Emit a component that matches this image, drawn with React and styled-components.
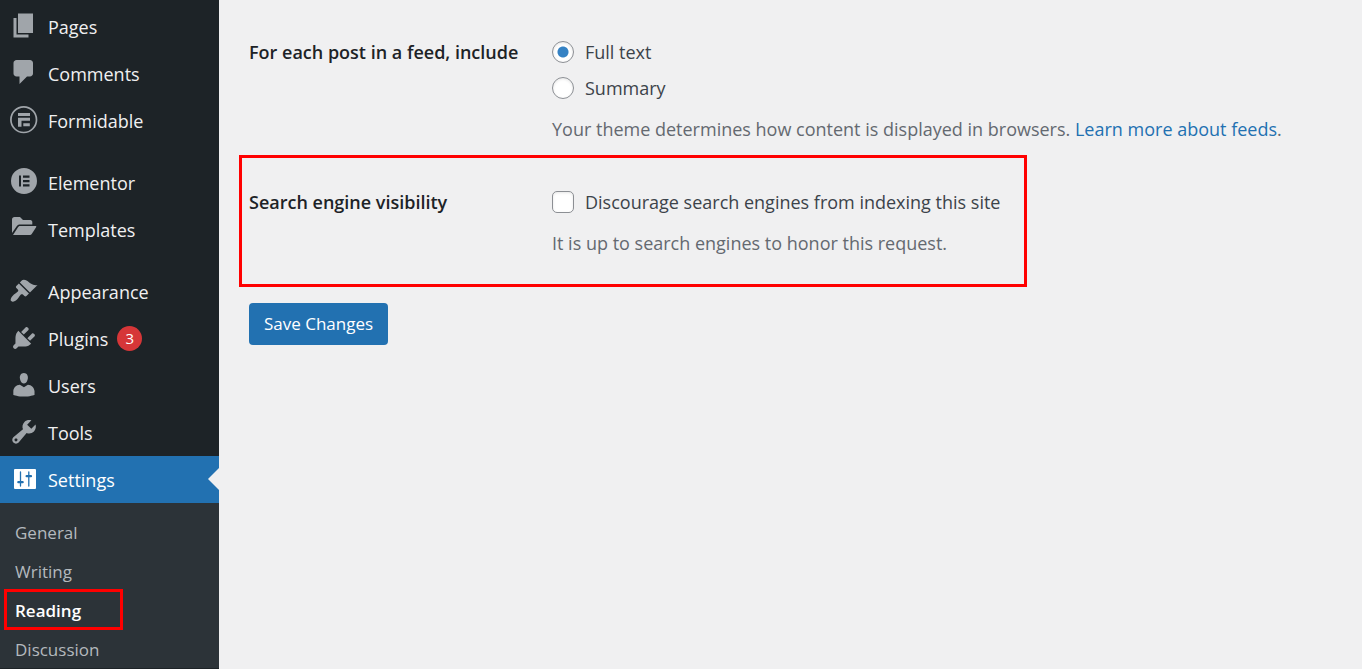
import React from "react";
import styled, { createGlobalStyle, css } from "styled-components";

const GlobalStyle = createGlobalStyle`
  * {
    box-sizing: border-box;
  }
  body {
    margin: 0;
    background-color: #f0f0f1;
    font-family: "Open Sans", "Noto Sans", sans-serif;
    font-size: 18px;
    line-height: 26px;
    color: #3c434a;
  }
`
const Page = styled.div`
  display: flex;
  min-height: 100vh;
`
const Sidebar = styled.nav`
  flex: none;
  width: 219px;
  padding-top: 3px;
  background-color: #1d2327;
`
const Menu = styled.ul`
  list-style: none;
  margin: 0;
  padding: 0;
`
const MenuItem = styled.li`
  margin-top: ${props=>props.$separated ? 15 : 0}px;
`
const MenuLink = styled.a`
  position: relative;
  display: flex;
  align-items: center;
  gap: 9px;
  height: 47px;
  padding-left: 9px;
  color: ${props=>props.$current ? '#fff' : '#f0f0f1'};
  background-color: ${props=>props.$current ? '#2271b1' : 'transparent'};
  text-decoration: none;
  ${props=>props.$current && css`
    &::after {
      content: "";
      position: absolute;
      right: 0;
      top: 12px;
      border: 11px solid transparent;
      border-left-width: 0;
      border-right-color: #f0f0f1;
    }
  `}
`
const MenuIcon = styled.svg`
  flex: none;
  width: 30px;
  height: 30px;
  margin-bottom: 1px;
  fill: ${props=>props.$current ? '#fff' : '#a0a5aa'};
`
const Badge = styled.span`
  width: 25px;
  height: 25px;
  border-radius: 50%;
  background-color: #d63638;
  color: #fff;
  font-size: 15px;
  line-height: 25px;
  text-align: center;
`
const SubMenu = styled.ul`
  list-style: none;
  margin: 0;
  padding: 9px 0 0 5px;
  background-color: #2c3338;
`
const SubLink = styled.a`
  display: flex;
  align-items: center;
  width: 117px;
  height: 39px;
  padding: 2px 0 0 10px;
  font-size: 17px;
  color: #b4b9be;
  text-decoration: none;
  ${props=>props.$current && css`
    color: #fff;
    font-weight: 600;
    outline: 3px solid #f00;
    outline-offset: -2px;
  `}
`
const Content = styled.main`
  flex: 1;
  min-width: 0;
  padding: 5px 20px 0;
`
const Field = styled.section`
  display: grid;
  grid-template-columns: 303px 1fr;
  width: ${props=>props.$marked ? 'fit-content' : 'auto'};
  padding: 28px 24px ${props=>props.$marked ? 28 : 10}px 7px;
  border: 3px solid ${props=>props.$marked ? '#f00' : 'transparent'};
`
const FieldTitle = styled.h2`
  margin: 0;
  padding-top: 3px;
  font-size: 18px;
  line-height: 26px;
  font-weight: 600;
  color: #1d2327;
`
const Options = styled.div`
  display: flex;
  flex-direction: column;
  align-items: flex-start;
  gap: 4px;
`
const Option = styled.label`
  display: flex;
  align-items: center;
  gap: 11px;
  height: 32px;
`
const Choice = styled.input`
  appearance: none;
  flex: none;
  width: 22px;
  height: 22px;
  margin: 0;
  border: 1px solid #8c8f94;
  border-radius: ${props=>props.type === 'radio' ? '50%' : '5px'};
  background-color: #fff;
  box-shadow: inset 0 1px 3px rgba(0, 0, 0, 0.1);
  &:checked {
    background-image: radial-gradient(circle, #3582c4 5px, transparent 6px);
  }
`
const Hint = styled.p`
  margin: 12px 0 0;
  color: #646970;
`
const HintLink = styled.a`
  color: #2271b1;
  text-decoration: none;
`
const SaveButton = styled.button`
  height: 42px;
  margin: 16px 10px;
  padding: 0 15px;
  border: 0;
  border-radius: 4px;
  background-color: #2271b1;
  color: #fff;
  font: inherit;
  font-size: 17px;
`

const icons = {
  pages: <path d="M6 15V2h10v13H6zm-1 1h8v2H3V5h2v11z" />,
  comments: <path d="M5 2h9c1.1 0 2 .9 2 2v7c0 1.1-.9 2-2 2h-2l-5 5v-5H5c-1.1 0-2-.9-2-2V4c0-1.1.9-2 2-2z" />,
  formidable: (
    <>
      <circle cx="14.7" cy="14.7" r="12.8" fill="none" stroke="#a0a5aa" strokeWidth="1.7" />
      <path d="M9 8h12v3H9zM9 12.700h12v3h-8.500v6H9zM14.300 18.200h6.500v3h-6.500z" />
    </>
  ),
  elementor: (
    <path fillRule="evenodd" d="M15 1a13 13 0 1 0 0 26a13 13 0 1 0 0-26zM10 8.500h2v11h-2zM14 8.500h6.500v2.200H14zM14 13h6.500v2.200H14zM14 17.300h6.500v2.200H14z" />
  ),
  templates: (
    <path d="M3 19V5.500C3 4 4 3 5.500 3H11l3 3h7.500C22.500 6 23.300 7 23.300 8v2.500H11c-1.500 0-2.500.6-3.300 1.700zM4 21l5-7.700c.6-.9 1.200-1.300 2.200-1.300H26.500c.8 0 1 .6.6 1.200l-4.200 6.600c-.5.8-1.200 1.200-2 1.200z" />
  ),
  appearance: <path d="M14.480 11.060L7.410 3.990l1.500-1.500c.5-.56 2.300-.47 3.510.32 1.210.8 1.430 1.280 2.910 2.100 1.180.64 2.450 1.260 4.450.85zm-.71.71L6.700 4.700 4.930 6.470c-.39.39-.39 1.020 0 1.410l1.060 1.060c.39.39.39 1.030 0 1.420-.6.6-1.430 1.110-2.210 1.690-.35.26-.7.53-1.010.84C1.430 14.230.4 16.080 1.400 17.070c.99 1 2.840-.03 4.180-1.360.31-.31.58-.66.85-1.020.57-.78 1.080-1.610 1.690-2.210.39-.39 1.020-.39 1.410 0l1.060 1.060c.39.39 1.020.39 1.410 0z" />,
  plugins: <path d="M13.110 4.360L9.870 7.600 8 5.730l3.240-3.240c.35-.34 1.050-.2 1.560.32.52.51.66 1.210.31 1.550zm-8 1.770l.91-1.120 9.010 9.010-1.190.84c-.71.71-2.630 1.160-3.820 1.160H6.140L4.900 17.260c-.59.59-1.540.59-2.120 0-.59-.58-.59-1.530 0-2.120l1.240-1.240v-3.880c0-1.130.4-3.190 1.090-3.890zm7.260 3.970l3.240-3.240c.34-.35 1.040-.21 1.550.31.52.51.66 1.210.31 1.550l-3.240 3.250z" />,
  users: <path d="M10 9.250c-2.270 0-2.730-3.440-2.730-3.440C7 4.020 7.820 2 9.970 2c2.160 0 2.980 2.020 2.710 3.810 0 0-.41 3.440-2.680 3.440zm0 2.570L12.720 10c2.390 0 4.520 2.330 4.520 4.530v2.490s-3.650 1.130-7.240 1.130c-3.650 0-7.240-1.130-7.240-1.130v-2.490c0-2.250 1.940-4.480 4.470-4.480z" />,
  tools: <path d="M16.680 9.770c-1.340 1.340-3.300 1.670-4.950.99l-5.410 6.520c-.99.99-2.590.99-3.580 0s-.99-2.590 0-3.570l6.520-5.420c-.68-1.650-.35-3.610.99-4.950 1.280-1.280 3.120-1.620 4.720-1.060l-2.890 2.890 2.820 2.820 2.860-2.870c.53 1.580.18 3.390-1.080 4.650zM3.810 16.210c.4.39 1.040.39 1.430 0 .4-.4.4-1.040 0-1.430-.39-.4-1.030-.4-1.430 0-.39.39-.39 1.030 0 1.430z" />,
  settings: (
    <>
      <rect x="5" y="5" width="22" height="20" rx="1" />
      <path d="M11.500 8v14M19.800 8v14" fill="none" stroke="#2271b1" strokeWidth="1.300" strokeLinecap="round" />
      <path d="M9.300 18.200h4.400M17.600 12.200H22" fill="none" stroke="#2271b1" strokeWidth="2.200" strokeLinecap="round" />
    </>
  ),
}
const menu = [
  {title: 'Pages', icon: 'pages', box: '0 0.3 20 20'},
  {title: 'Comments', icon: 'comments', box: '0 0.7 20 20'},
  {title: 'Formidable', icon: 'formidable', box: '0 0 30 30'},
  {title: 'Elementor', icon: 'elementor', box: '0 0 30 30', separated: true},
  {title: 'Templates', icon: 'templates', box: '0 0 30 30'},
  {title: 'Appearance', icon: 'appearance', box: '-0.2 -0.5 21 21', separated: true},
  {title: 'Plugins', icon: 'plugins', box: '-0.5 -0.5 21 21', count: 3},
  {title: 'Users', icon: 'users', box: '-0.2 0 20.5 20.5'},
  {title: 'Tools', icon: 'tools', box: '-0.2 0 20.3 20.3'},
  {title: 'Settings', icon: 'settings', box: '0 0 30 30', current: true},
]
const subMenu = ['General', 'Writing', 'Reading', 'Discussion']

const AdminMenu = ()=>(
  <Sidebar>
    <Menu>
      {menu.map(item=>(
        <MenuItem key={item.title} $separated={item.separated}>
          <MenuLink href="#" $current={item.current}>
            <MenuIcon viewBox={item.box} $current={item.current} aria-hidden="true">{icons[item.icon]}</MenuIcon>
            {item.title}
            {item.count && <Badge>{item.count}</Badge>}
          </MenuLink>
        </MenuItem>
      ))}
    </Menu>
    <SubMenu>
      {subMenu.map(title=>(
        <li key={title}>
          <SubLink href="#" $current={title === 'Reading'}>{title}</SubLink>
        </li>
      ))}
    </SubMenu>
  </Sidebar>
)

const App = ()=>{
  return(
    <>
      <GlobalStyle />
      <Page>
        <AdminMenu />
        <Content>
          <Field>
            <FieldTitle>For each post in a feed, include</FieldTitle>
            <div>
              <Options>
                <Option><Choice type="radio" name="rss" defaultChecked />Full text</Option>
                <Option><Choice type="radio" name="rss" />Summary</Option>
              </Options>
              <Hint>
                Your theme determines how content is displayed in browsers. <HintLink href="#">Learn more about feeds</HintLink>.
              </Hint>
            </div>
          </Field>
          <Field $marked>
            <FieldTitle>Search engine visibility</FieldTitle>
            <div>
              <Options>
                <Option><Choice type="checkbox" />Discourage search engines from indexing this site</Option>
              </Options>
              <Hint>It is up to search engines to honor this request.</Hint>
            </div>
          </Field>
          <SaveButton type="button">Save Changes</SaveButton>
        </Content>
      </Page>
    </>
  )
}

export default App
